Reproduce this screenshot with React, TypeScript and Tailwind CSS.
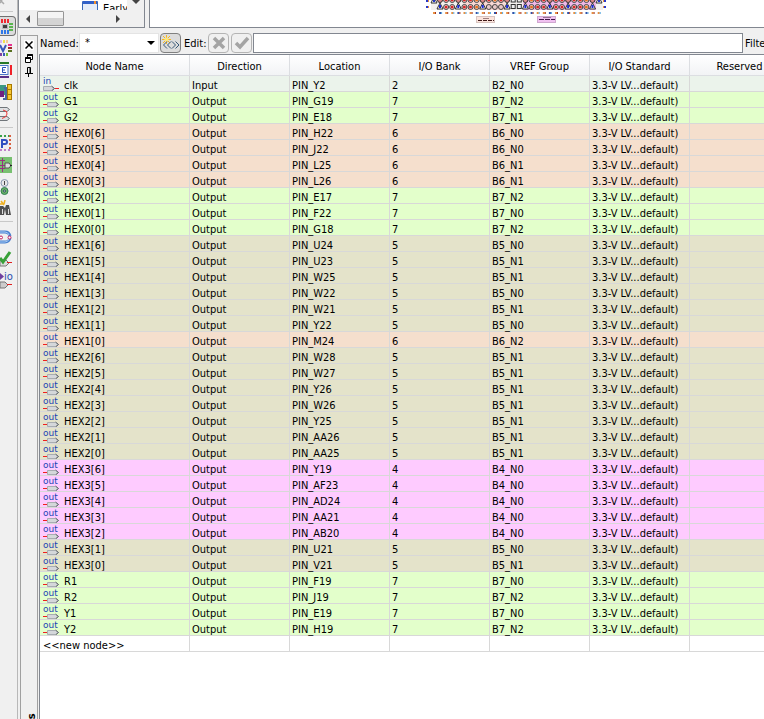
import type { ReactNode } from 'react';

type Bank = 'input' | 'b4' | 'b5' | 'b6' | 'b7';

interface PinNode {
  name: string;
  pin: string;
  vref: string;
}

const pins: PinNode[] = [
  { name: 'clk', pin: 'PIN_Y2', vref: 'B2_N0' },
  { name: 'G1', pin: 'PIN_G19', vref: 'B7_N2' },
  { name: 'G2', pin: 'PIN_E18', vref: 'B7_N1' },
  { name: 'HEX0[6]', pin: 'PIN_H22', vref: 'B6_N0' },
  { name: 'HEX0[5]', pin: 'PIN_J22', vref: 'B6_N0' },
  { name: 'HEX0[4]', pin: 'PIN_L25', vref: 'B6_N1' },
  { name: 'HEX0[3]', pin: 'PIN_L26', vref: 'B6_N1' },
  { name: 'HEX0[2]', pin: 'PIN_E17', vref: 'B7_N2' },
  { name: 'HEX0[1]', pin: 'PIN_F22', vref: 'B7_N0' },
  { name: 'HEX0[0]', pin: 'PIN_G18', vref: 'B7_N2' },
  { name: 'HEX1[6]', pin: 'PIN_U24', vref: 'B5_N0' },
  { name: 'HEX1[5]', pin: 'PIN_U23', vref: 'B5_N1' },
  { name: 'HEX1[4]', pin: 'PIN_W25', vref: 'B5_N1' },
  { name: 'HEX1[3]', pin: 'PIN_W22', vref: 'B5_N0' },
  { name: 'HEX1[2]', pin: 'PIN_W21', vref: 'B5_N1' },
  { name: 'HEX1[1]', pin: 'PIN_Y22', vref: 'B5_N0' },
  { name: 'HEX1[0]', pin: 'PIN_M24', vref: 'B6_N2' },
  { name: 'HEX2[6]', pin: 'PIN_W28', vref: 'B5_N1' },
  { name: 'HEX2[5]', pin: 'PIN_W27', vref: 'B5_N1' },
  { name: 'HEX2[4]', pin: 'PIN_Y26', vref: 'B5_N1' },
  { name: 'HEX2[3]', pin: 'PIN_W26', vref: 'B5_N1' },
  { name: 'HEX2[2]', pin: 'PIN_Y25', vref: 'B5_N1' },
  { name: 'HEX2[1]', pin: 'PIN_AA26', vref: 'B5_N1' },
  { name: 'HEX2[0]', pin: 'PIN_AA25', vref: 'B5_N1' },
  { name: 'HEX3[6]', pin: 'PIN_Y19', vref: 'B4_N0' },
  { name: 'HEX3[5]', pin: 'PIN_AF23', vref: 'B4_N0' },
  { name: 'HEX3[4]', pin: 'PIN_AD24', vref: 'B4_N0' },
  { name: 'HEX3[3]', pin: 'PIN_AA21', vref: 'B4_N0' },
  { name: 'HEX3[2]', pin: 'PIN_AB20', vref: 'B4_N0' },
  { name: 'HEX3[1]', pin: 'PIN_U21', vref: 'B5_N0' },
  { name: 'HEX3[0]', pin: 'PIN_V21', vref: 'B5_N1' },
  { name: 'R1', pin: 'PIN_F19', vref: 'B7_N0' },
  { name: 'R2', pin: 'PIN_J19', vref: 'B7_N2' },
  { name: 'Y1', pin: 'PIN_E19', vref: 'B7_N0' },
  { name: 'Y2', pin: 'PIN_H19', vref: 'B7_N2' },
];

const headers = ['Node Name', 'Direction', 'Location', 'I/O Bank', 'VREF Group', 'I/O Standard', 'Reserved'];

const bankClasses: Record<Bank, string> = {
  input: 'bg-[#ebf3eb]',
  b4: 'bg-[#fecbff]',
  b5: 'bg-[#e4e3ca]',
  b6: 'bg-[#f5dfcd]',
  b7: 'bg-[#e3ffcb]',
};

const getBank = (vref: string): Bank => {
  switch (vref[1]) {
    case '4':
      return 'b4';
    case '5':
      return 'b5';
    case '6':
      return 'b6';
    case '7':
      return 'b7';
    default:
      return 'input';
  }
};

const cell = 'h-4 p-0 pt-1 pl-0.5 border-r border-b border-[#d8d8d8] whitespace-nowrap';
const nameCell = 'h-4 p-0 pl-[3px] border-r border-b border-[#d8d8d8] whitespace-nowrap';

// Small port symbol with its direction written above
const PortIcon = ({ output }: { output: boolean }) => (
  <svg width="17" height="15" viewBox="0 0 17 15" className="shrink-0" aria-hidden="true">
    <text x="0" y="8" fontSize="9" fontFamily="'DejaVu Sans', sans-serif" fill="#1c44b4">
      {output ? 'out' : 'in'}
    </text>
    {output ? (
      <>
        <path d="M0 12.500H4" stroke="#f02020" />
        <path d="M4.500 10.500H12.500L15.500 12.500L12.500 14.500H4.500Z" fill="#d4d7da" stroke="#a8adb2" />
        <path d="M12.500 10L15.500 12.500L12.500 15" fill="none" stroke="#60666c" />
      </>
    ) : (
      <>
        <path d="M11 12.500H16" stroke="#f02020" />
        <path d="M.5 10.500H8.500L11.500 12.500L8.500 14.500H.5Z" fill="#d4d7da" stroke="#a8adb2" />
        <path d="M8.500 10L11.500 12.500L8.500 15" fill="none" stroke="#60666c" />
      </>
    )}
  </svg>
);

const ToolButton = ({ label, active, children }: { label: string; active?: boolean; children: ReactNode }) => (
  <button
    type="button"
    aria-label={label}
    className={
      active
        ? 'w-4 h-5 shrink-0 flex items-center border border-l-0 border-[#707070] rounded-r bg-[#dcdcdc]'
        : 'w-4 h-5 shrink-0 flex items-center'
    }
  >
    <svg width="14" height="18" viewBox="0 0 14 18" className="shrink-0">
      {children}
    </svg>
  </button>
);

const Separator = () => <div className="h-px w-[13px] shrink-0 bg-[#c8c8c8]" />;

const SideTools = () => (
  <aside className="w-[18px] shrink-0 border-r border-[#b8b8b8] flex flex-col">
    <svg width="8" height="11" viewBox="0 0 8 11" className="shrink-0">
      <path d="M0 0L4 4M0 3L2 0" stroke="#aaa" strokeWidth="1.500" />
    </svg>
    <Separator />
    <div className="flex flex-col gap-0.5 pt-1">
      <ToolButton label="Package view" active>
        <path d="M2 2V6M5 2V6M8 2V6" stroke="#f02a30" strokeWidth="2" />
        <path d="M2 13V17M5 13V17M8 13V17" stroke="#2f78e8" strokeWidth="2" />
        <path d="M9 7H13M9 10H13M9 13H13" stroke="#5ab450" strokeWidth="2" />
        <rect x="2" y="7" width="6" height="5" fill="#b8b8b8" />
        <rect x="3" y="8" width="4" height="3" fill="#404040" />
      </ToolButton>
      <ToolButton label="VREF groups">
        <path d="M1 1V4" stroke="#d8b8f0" strokeWidth="2" />
        <path d="M4 1V4" stroke="#f0e04c" strokeWidth="2" />
        <path d="M7 1V4" stroke="#f4c898" strokeWidth="2" />
        <path d="M0 6L3 12L6 6" fill="none" stroke="#3858b8" strokeWidth="2" />
        <path d="M8 6H12" stroke="#e83090" strokeWidth="2" />
        <path d="M8 9H12" stroke="#a02828" strokeWidth="2" />
        <path d="M8 12H12" stroke="#587020" strokeWidth="2" />
        <path d="M1 14V17" stroke="#8040a0" strokeWidth="2" />
        <path d="M4 14V17" stroke="#3858b8" strokeWidth="2" />
        <path d="M7 14V17" stroke="#78c038" strokeWidth="2" />
      </ToolButton>
      <ToolButton label="Edges">
        <path d="M0 2H9" stroke="#287828" strokeWidth="2" />
        <path d="M0 16H9" stroke="#583088" strokeWidth="2" />
        <rect x="-2" y="4.500" width="10" height="9" fill="#fff" stroke="#4c78c8" />
        <path d="M6 6.500H2.500V11.500H6M2.500 9H5" fill="none" stroke="#2850b8" />
        <path d="M11 4V14" stroke="#f02028" strokeWidth="2" />
      </ToolButton>
      <ToolButton label="Differential pairs">
        <rect x="0" y="2" width="6" height="10" fill="#3c9880" />
        <path d="M0 8H4V14H0Z" fill="#702080" />
        <path d="M4 5H6V16H3" fill="none" stroke="#4868a0" strokeWidth="2" />
        <rect x="7.500" y="1.500" width="4" height="15" fill="#f8c830" stroke="#a87800" />
        <path d="M8 6.500H12M8 11.500H12" stroke="#a87800" />
      </ToolButton>
      <ToolButton label="Pad connections">
        <path d="M0 2.500H7L9.500 4.500L7 6.500H0M0 11.500H7L9.500 13.500L7 15.500H0" fill="#dde0e2" stroke="#70757a" />
        <path d="M3 5Q8 6 7 9Q7 12 2 13.500" fill="none" stroke="#f03838" />
      </ToolButton>
    </div>
    <div className="flex flex-col gap-0.5 pt-[3px]">
      <Separator />
      <div className="h-px" />
      <ToolButton label="Pin planner">
        <path d="M0 2H11" stroke="#38a048" strokeWidth="2" strokeDasharray="2 2" />
        <path d="M0 16H11" stroke="#c080c8" strokeWidth="2" strokeDasharray="2 2" />
        <path d="M10 1V17" stroke="#d86040" strokeWidth="2" strokeDasharray="2 2" />
        <path d="M2 14V6H5Q7 6 7 8T5 10H2" fill="none" stroke="#3050c0" strokeWidth="2" />
      </ToolButton>
      <ToolButton label="Assign pins">
        <rect x="0" y="1" width="12" height="16" fill="#78c070" />
        <path d="M2.500 2V16M0 4.500H5M0 12.500H5M0 9.500H5" stroke="#983080" />
        <path d="M5 7H9L11 9.500L9 12H5Z" fill="#ddd" stroke="#555" />
        <path d="M10 9.500H12" stroke="#222" />
      </ToolButton>
      <ToolButton label="Pin legend">
        <circle cx="4.500" cy="5" r="3.500" fill="#e8e8e8" stroke="#8898b0" />
        <path d="M4.500 3V7" stroke="#444" />
        <circle cx="4.500" cy="13" r="3.500" fill="#68b068" stroke="#308050" />
        <circle cx="4.500" cy="13" r="1" fill="#fff" stroke="#245" />
      </ToolButton>
      <ToolButton label="Find pins">
        <path d="M1 1L4 5M5 0L4 4M0 4H4" stroke="#f0b020" strokeWidth="1.500" />
        <path d="M0 6L0 15H4L5 9L6 15H11L9 5H6L5 8L3 6Z" fill="#505050" />
        <path d="M8.500 9V14M2.500 9V14" stroke="#ddd" />
      </ToolButton>
    </div>
    <div className="flex flex-col gap-0.5 pt-0.5">
      <Separator />
      <div className="h-px" />
      <ToolButton label="Refresh assignments">
        <path d="M0 4H5Q9 4 10 8M0 14H5Q9 14 10 10" fill="none" stroke="#4880d0" strokeWidth="3" />
        <path d="M0 4H5Q8 4 9 7M0 14H5Q8 14 9 11" fill="none" stroke="#a8ccf4" />
        <circle cx="1" cy="9.500" r="1.500" fill="#fff" stroke="#c02060" />
        <circle cx="9.500" cy="9.500" r="1.500" fill="#fff" stroke="#c02060" />
      </ToolButton>
      <ToolButton label="Check I/O assignments">
        <path d="M0 10H6L9 13L6 16H0Z" fill="#ddd" stroke="#777" />
        <path d="M7 12.500H12" stroke="#e02020" />
        <path d="M0 8L3 12L10 2" fill="none" stroke="#38a038" strokeWidth="3" />
      </ToolButton>
      <ToolButton label="Export I/O">
        <path d="M0 1L4 4.500L0 8Z" fill="#7040a0" />
        <text x="4" y="8" fontSize="10" fontFamily="'DejaVu Sans', sans-serif" fill="#2850b0">
          io
        </text>
        <path d="M0 10H5L8 13L5 16H0Z" fill="#ccc" stroke="#777" />
        <path d="M7 12.500H12" stroke="#e02020" />
      </ToolButton>
    </div>
  </aside>
);

// Lower edge of the device package: a row of pads, ticks and bank labels
const PackageView = () => {
  const triangles = [0, 3, 7, 11, 14, 18, 21, 25];
  return (
    <svg width="190" height="26" viewBox="0 0 190 26" role="img" aria-label="Device package">
      <rect x="10" y="0" width="172" height="10" fill="#f3f0ee" />
      <rect x="42" y="0" width="42" height="10" fill="#f8d8d4" />
      <rect x="102" y="0" width="73" height="10" fill="#f0b8e8" />
      {Array.from({ length: 26 }).map((_, i) => {
        const x = 19 + i * 6.1;
        const color = i % 3 === 0 ? '#e87020' : '#d82828';
        if (i === 12 || i === 13) {
          return (
            <g key={i} fill="#eee" stroke="#333">
              <rect x={x - 2} y="4.500" width="4" height="4" />
              <rect x={x - 2} y="-2" width="4" height="4" />
            </g>
          );
        }
        if (triangles.includes(i)) {
          return (
            <g key={i}>
              <path d={`M${x - 3} 9L${x} 3L${x + 3} 9Z`} fill="#fff" stroke="#333" />
              <rect x={x - 1} y="5" width="2" height="3" fill="#1828d8" />
              <circle cx={x} cy="0" r="2.500" fill="#d88" stroke="#333" />
            </g>
          );
        }
        return (
          <g key={i} stroke="#444">
            <circle cx={x} cy="7" r="2.500" fill={i > 7 && i < 11 ? '#e8c8c8' : '#f4e4e0'} />
            <circle cx={x} cy="0" r="2.500" fill="#f4e4e0" />
            {(i < 8 || i > 10) && <circle cx={x} cy="7" r="1.500" fill={color} stroke="none" />}
            <circle cx={x} cy="0" r="1.500" fill={color} stroke="none" />
          </g>
        );
      })}
      <path d="M10 3L13 -3L16 3ZM175 3L178 -3L181 3Z" fill="#fff" stroke="#333" />
      <path d="M12 1H14M177 1H179" stroke="#2838c8" strokeWidth="2" />
      <path d="M5 1H7M5 7H7M183 1H185M183 7H185" stroke="#2838c8" strokeWidth="2" />
      <path d="M7 1H8M7 7H8M182 1H183M182 7H183" stroke="#e89040" strokeWidth="2" />
      {Array.from({ length: 28 }).map((_, i) => (
        <g key={i}>
          <rect x={12 + i * 6.1} y="12" width="2" height="2" fill={i % 3 === 1 ? '#3050a8' : '#e89040'} />
          <rect x={14 + i * 6.1} y="12" width="1" height="2" fill={i % 2 === 1 ? '#58a8e0' : '#a83820'} />
        </g>
      ))}
      <rect x="55.500" y="16.500" width="18" height="6" fill="#fbe4dc" stroke="#d8c4c0" />
      <path d="M62 18.500H68" stroke="#a08080" />
      <path d="M57 20.500H73" stroke="#401818" strokeDasharray="4 1" />
      <rect x="116.500" y="16.500" width="18" height="6" fill="#f0c0f0" stroke="#d0a8d0" />
      <path d="M122 17.500H130" stroke="#907090" />
      <path d="M118 19.500H134" stroke="#401848" strokeDasharray="5 1" />
    </svg>
  );
};

const TopPanels = () => (
  <div className="h-7 shrink-0 flex gap-1">
    <div className="w-[127px] shrink-0 flex border-l border-r border-b border-[#828790] bg-white">
      <div className="flex-1 min-w-0 flex flex-col">
        <div className="h-2.5 pl-[63px] flex gap-[5px] overflow-hidden">
          <svg width="16" height="10" viewBox="0 0 16 10" className="shrink-0">
            <path d="M.5 10V1.500H15.500V10" fill="#e4ecf8" stroke="#3868b8" />
            <path d="M1 2.500H15" stroke="#3060c8" strokeWidth="3" />
            <path d="M13 1V4" stroke="#f09030" strokeWidth="2" />
          </svg>
          <span className="leading-[18px]">Early</span>
        </div>
        {/* Horizontal scroll bar */}
        <div className="flex-1 flex items-center bg-[#f0f0f0]">
          <button type="button" aria-label="Scroll left" className="w-[18px] flex justify-center">
            <svg width="4" height="8" viewBox="0 0 4 8"><path d="M4 0V8L0 4Z" fill="#444" /></svg>
          </button>
          <div className="w-[27px] h-[15px] border border-[#969696] rounded-[1px] bg-linear-to-b from-[#f4f4f4] from-50% to-[#d4d4d4] to-50%" />
          <div className="flex-1" />
          <button type="button" aria-label="Scroll right" className="w-[18px] flex justify-center">
            <svg width="4" height="8" viewBox="0 0 4 8"><path d="M0 0V8L4 4Z" fill="#444" /></svg>
          </button>
        </div>
      </div>
      <div className="w-[17px] flex flex-col">
        <button type="button" aria-label="Scroll down" className="h-2.5 flex justify-center bg-[#f0f0f0]">
          <svg width="8" height="4" viewBox="0 0 8 4"><path d="M0 0H8L4 4Z" fill="#444" /></svg>
        </button>
        <div className="flex-1 bg-[#f0f0f0]" />
      </div>
    </div>
    <div className="flex-1 min-w-0 flex justify-center pl-[118px] border-l border-b border-[#828790] bg-white overflow-hidden">
      <div className="shrink-0">
        <PackageView />
      </div>
    </div>
  </div>
);

const DockStrip = () => (
  <div className="w-[18px] shrink-0 mt-[7px] pt-1 flex flex-col items-center gap-1 border border-b-0 border-[#a0a0a0] overflow-hidden">
    <button type="button" aria-label="Close" className="w-2.5 h-2.5 flex items-center justify-center bg-white">
      <svg width="8" height="8" viewBox="0 0 8 8"><path d="M.5.5L7.500 7.500M7.500.5L.5 7.500" stroke="#000" strokeWidth="1.500" /></svg>
    </button>
    <button type="button" aria-label="Float">
      <svg width="8" height="9" viewBox="0 0 8 9" fill="#fff" stroke="#000">
        <path d="M2.500 .5H7.500V5.500H2.500Z" />
        <path d="M2.500 1H7.500" strokeWidth="2" />
        <path d="M.5 3.500H5.500V8.500H.5Z" />
        <path d="M.5 4H5.500" strokeWidth="2" />
      </svg>
    </button>
    <button type="button" aria-label="Pin">
      <svg width="8" height="10" viewBox="0 0 8 10" fill="none" stroke="#000">
        <path d="M2.500 6V.5H5.500V6M0 6.500H8M3.500 6.500V10M5 1V6" />
      </svg>
    </button>
    <div className="flex-1" />
    <span className="[writing-mode:vertical-rl] rotate-180 h-1.5 pl-1.5 flex justify-end font-bold leading-3">All Pins</span>
  </div>
);

const EditBar = () => (
  <div className="h-[26px] shrink-0 pt-[5px] flex items-start">
    <label htmlFor="named" className="w-[40px] shrink-0 pl-px leading-[22px]">Named:</label>
    <div className="relative w-20 h-5 shrink-0">
      <select id="named" defaultValue="*" className="w-full h-full pl-[5px] appearance-none bg-white border border-[#e4e4e4]">
        <option>*</option>
      </select>
      <svg width="8" height="4" viewBox="0 0 8 4" className="absolute right-1 top-2 pointer-events-none">
        <path d="M0 0H8L4 4Z" fill="#000" />
      </svg>
    </div>
    <button type="button" aria-label="Filter nodes" className="ml-px w-[21px] h-5 shrink-0 flex items-center justify-center border border-[#808080] rounded-sm bg-[#dcdcdc]">
      <svg width="18" height="16" viewBox="0 0 18 16" fill="none" className="shrink-0">
        <path d="M4.500 0V9M0 4.500H9M1 1L8 8M8 1L1 8" stroke="#f8b820" />
        <circle cx="4.500" cy="4.500" r="2" fill="#ffe878" />
        <path d="M5 6.500L1.500 10L5 13.500M9 6.500L5.500 10L9 13.500M10 6.500L13.500 10L10 13.500M13.500 6.500L17 10L13.500 13.500" stroke="#385878" />
      </svg>
    </button>
    <label htmlFor="edit" className="w-[27px] shrink-0 pl-[3px] leading-[22px] whitespace-nowrap">Edit:</label>
    <button type="button" aria-label="Cancel edit" className="w-[21px] h-5 shrink-0 flex items-center justify-center border border-[#b4b4b4] rounded-sm bg-[#f0f0f0]">
      <svg width="14" height="14" viewBox="0 0 14 14"><path d="M2 2L12 12M12 2L2 12" stroke="#a4a4a4" strokeWidth="3.500" /></svg>
    </button>
    <button type="button" aria-label="Accept edit" className="ml-0.5 w-[21px] h-5 shrink-0 flex items-center justify-center border border-[#b4b4b4] rounded-sm bg-[#f0f0f0]">
      <svg width="16" height="14" viewBox="0 0 16 14"><path d="M2 7L6 11L14 2" fill="none" stroke="#a4a4a4" strokeWidth="3.500" /></svg>
    </button>
    <input id="edit" type="text" className="ml-px flex-1 min-w-0 h-5 px-1 bg-white border border-[#828790]" />
    <span className="w-[21px] pl-0.5 shrink-0 leading-[22px] overflow-hidden">Filter:</span>
  </div>
);

const PinTable = () => (
  <div className="flex-1 min-h-0 overflow-hidden border-l border-t border-[#828790] bg-white">
    <table className="table-fixed w-[750px] border-separate border-spacing-0 leading-[11px]">
      <colgroup>
        <col className="w-[150px]" />
        {headers.slice(1).map((h) => (
          <col key={h} className="w-[100px]" />
        ))}
      </colgroup>
      <thead>
        <tr>
          {headers.map((h) => (
            <th
              key={h}
              scope="col"
              className="h-[21px] p-0 pt-[3px] font-normal text-center border-r border-b border-[#dcdee2] bg-linear-to-b from-white to-[#f2f3f5]"
            >
              {h}
            </th>
          ))}
        </tr>
      </thead>
      <tbody>
        {pins.map((p) => (
          <tr key={p.name} className={bankClasses[getBank(p.vref)]}>
            <td className={nameCell}>
              <div className="flex gap-1 h-[15px]">
                <PortIcon output={p.name !== 'clk'} />
                <span className="pt-1">{p.name}</span>
              </div>
            </td>
            <td className={cell}>{p.name === 'clk' ? 'Input' : 'Output'}</td>
            <td className={cell}>{p.pin}</td>
            <td className={cell}>{p.vref[1]}</td>
            <td className={cell}>{p.vref}</td>
            <td className={cell}>3.3-V LV...default)</td>
            <td className={cell} />
          </tr>
        ))}
        <tr>
          <td className={nameCell}>
            <div className="h-[15px] pt-1">&lt;&lt;new node&gt;&gt;</div>
          </td>
          {headers.slice(1).map((h) => (
            <td key={h} className={cell} />
          ))}
        </tr>
      </tbody>
    </table>
  </div>
);

const App = () => (
  <div className="h-screen flex overflow-hidden bg-[#f0f0f0] text-[11px] text-black font-['DejaVu_Sans_Condensed','DejaVu_Sans',sans-serif]">
    <SideTools />
    <div className="flex-1 min-w-0 flex flex-col">
      <TopPanels />
      <div className="flex-1 min-h-0 flex gap-px pl-0.5">
        <DockStrip />
        <main className="flex-1 min-w-0 flex flex-col">
          <EditBar />
          <PinTable />
        </main>
      </div>
    </div>
  </div>
);

export default App;
